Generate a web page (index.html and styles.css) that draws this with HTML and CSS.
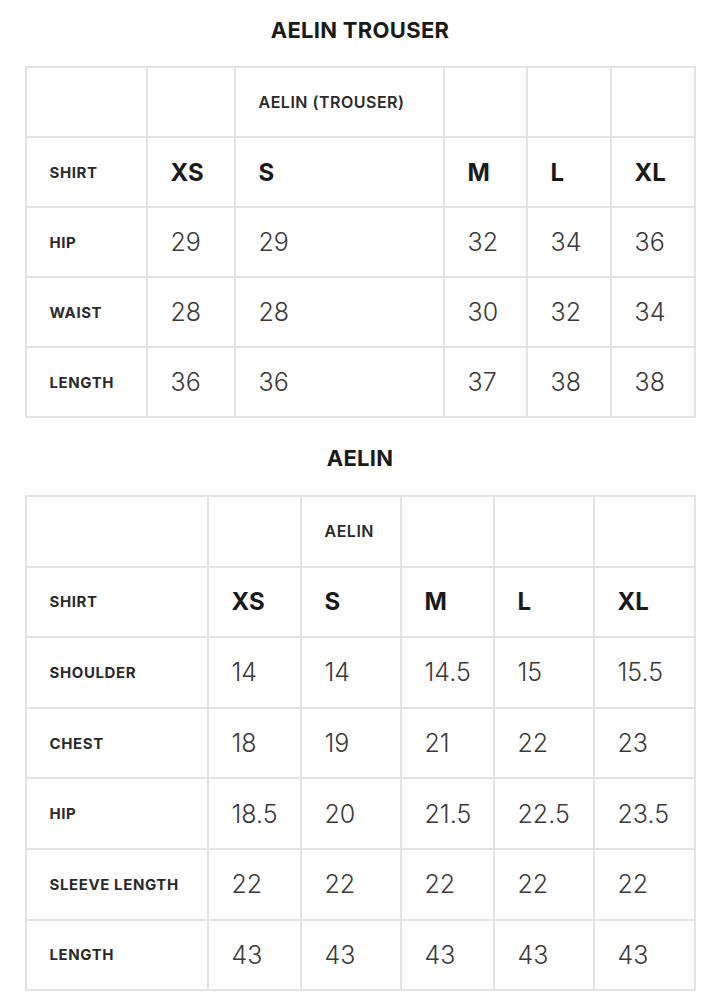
FILE: index.html
```html
<!DOCTYPE html>
<html>
<head>
<meta charset="utf-8">
<link rel="stylesheet" href="styles.css">
</head>
<body>
<div class="page">
  <h2 class="title title-first">AELIN TROUSER</h2>
  <table class="chart chart-trouser">
    <colgroup>
      <col class="c121"><col class="c88"><col class="c209"><col class="c83"><col class="c84"><col class="c84">
    </colgroup>
    <tr><td></td><td></td><td class="sub">AELIN (TROUSER)</td><td></td><td></td><td></td></tr>
    <tr><td class="lbl">SHIRT</td><td class="size">XS</td><td class="size">S</td><td class="size">M</td><td class="size">L</td><td class="size">XL</td></tr>
    <tr><td class="lbl">HIP</td><td class="num">29</td><td class="num">29</td><td class="num">32</td><td class="num">34</td><td class="num">36</td></tr>
    <tr><td class="lbl">WAIST</td><td class="num">28</td><td class="num">28</td><td class="num">30</td><td class="num">32</td><td class="num">34</td></tr>
    <tr><td class="lbl">LENGTH</td><td class="num">36</td><td class="num">36</td><td class="num">37</td><td class="num">38</td><td class="num">38</td></tr>
  </table>

  <h2 class="title title-second">AELIN</h2>
  <table class="chart chart-top">
    <colgroup>
      <col class="c182"><col class="c93"><col class="c100"><col class="c93"><col class="c100"><col class="c101">
    </colgroup>
    <tr><td></td><td></td><td class="sub">AELIN</td><td></td><td></td><td></td></tr>
    <tr><td class="lbl">SHIRT</td><td class="size">XS</td><td class="size">S</td><td class="size">M</td><td class="size">L</td><td class="size">XL</td></tr>
    <tr><td class="lbl">SHOULDER</td><td class="num">14</td><td class="num">14</td><td class="num">14.5</td><td class="num">15</td><td class="num">15.5</td></tr>
    <tr><td class="lbl">CHEST</td><td class="num">18</td><td class="num">19</td><td class="num">21</td><td class="num">22</td><td class="num">23</td></tr>
    <tr><td class="lbl">HIP</td><td class="num">18.5</td><td class="num">20</td><td class="num">21.5</td><td class="num">22.5</td><td class="num">23.5</td></tr>
    <tr><td class="lbl">SLEEVE LENGTH</td><td class="num">22</td><td class="num">22</td><td class="num">22</td><td class="num">22</td><td class="num">22</td></tr>
    <tr><td class="lbl">LENGTH</td><td class="num">43</td><td class="num">43</td><td class="num">43</td><td class="num">43</td><td class="num">43</td></tr>
  </table>
</div>
</body>
</html>
```

FILE: styles.css
```css
html, body {
  margin: 0;
  padding: 0;
  background: #ffffff;
}

.page {
  width: 671px;
  margin: 0 auto;
  font-family: "Inter", "Noto Sans", sans-serif;
  color: #1e1e1e;
}

.title {
  font-size: 22px;
  font-weight: 700;
  line-height: 30px;
  text-align: center;
  margin: 0;
  color: #1a1a1a;
  letter-spacing: 0.3px;
}

.title-first {
  padding-top: 15px;
  padding-bottom: 21px;
}

.title-second {
  padding-top: 25px;
  padding-bottom: 22px;
}

.chart {
  width: 671px;
  border-collapse: collapse;
  table-layout: fixed;
}

.chart td {
  border: 2px solid #e3e3e3;
  padding: 0 0 0 23px;
  vertical-align: middle;
  box-sizing: border-box;
}

.chart-trouser td {
  height: 70px;
}

.chart-top td {
  height: 70.6px;
}

.c121 { width: 121px; }
.c88 { width: 88px; }
.c209 { width: 209px; }
.c83 { width: 83px; }
.c84 { width: 84px; }
.c182 { width: 182px; }
.c93 { width: 93px; }
.c100 { width: 100px; }
.c101 { width: 101px; }

.lbl {
  font-size: 15px;
  font-weight: 700;
  color: #2a2a2a;
  letter-spacing: 0.6px;
  white-space: nowrap;
}

.sub {
  font-size: 16px;
  font-weight: 600;
  color: #2a2a2a;
  letter-spacing: 0.5px;
}

.size {
  font-size: 24px;
  font-weight: 700;
  color: #1a1a1a;
}

.num {
  font-size: 25px;
  font-weight: 300;
  color: #3a3a3a;
}
```
